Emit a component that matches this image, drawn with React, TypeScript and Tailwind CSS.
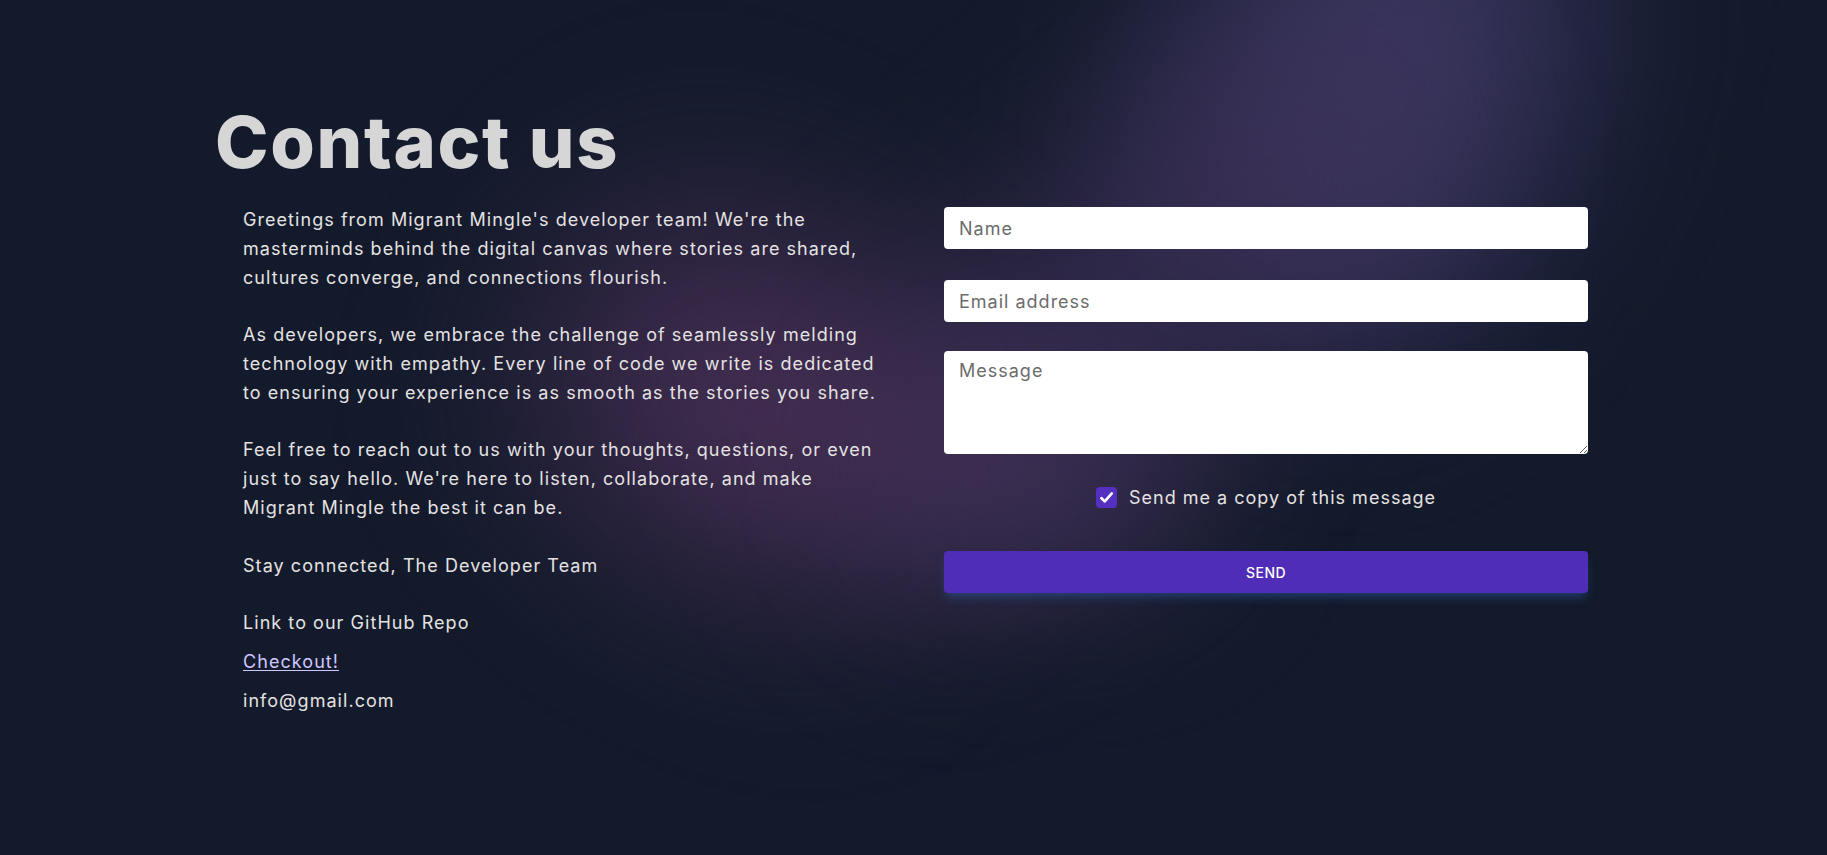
import React from 'react';

const body = { fontFamily: 'Inter, "Noto Sans", sans-serif' };

export default function App() {
  return (
    <div className="relative min-h-screen overflow-hidden bg-[#131a2b] text-[#e4e2e2]" style={body}>
      {/* background glow */}
      <div className="pointer-events-none absolute inset-0">
        <div className="absolute left-[1190px] top-[-170px] h-[520px] w-[360px] rotate-[25deg] rounded-full bg-[#4a4275] opacity-70 blur-[90px]" />
        <div className="absolute left-[760px] top-[170px] h-[260px] w-[720px] -rotate-[40deg] rounded-full bg-[#3c2f55] opacity-70 blur-[90px]" />
        <div className="absolute left-[540px] top-[240px] h-[320px] w-[420px] rotate-[30deg] rounded-full bg-[#553560] opacity-75 blur-[100px]" />
        <div className="absolute left-[900px] top-[380px] h-[200px] w-[300px] rounded-full bg-[#4a3660] opacity-60 blur-[80px]" />
      </div>

      <div className="relative mx-auto w-[1397px] pt-[106px]">
        <h1 className="text-[72px] font-extrabold leading-none tracking-[1.7px] text-[#d6d6d6]">
          Contact us
        </h1>

        <div className="mt-[28px] flex">
          <div className="w-[729px] pl-[28px] pr-[63px] text-[18px] leading-[28.8px] tracking-[1.05px]">
            <p className="mb-[28.8px]">
              Greetings from Migrant Mingle's developer team! We're the masterminds behind the digital canvas where stories are shared, cultures converge, and connections flourish.
            </p>
            <p className="mb-[28.8px]">
              As developers, we embrace the challenge of seamlessly melding technology with empathy. Every line of code we write is dedicated to ensuring your experience is as smooth as the stories you share.
            </p>
            <p className="mb-[28.8px]">
              Feel free to reach out to us with your thoughts, questions, or even just to say hello. We're here to listen, collaborate, and make Migrant Mingle the best it can be.
            </p>
            <p className="mb-[28.8px]">Stay connected, The Developer Team</p>
            <p className="mb-[10px]">Link to our GitHub Repo</p>
            <p className="mb-[10px]">
              <a href="#" className="text-[#cfc8ff] underline underline-offset-2">Checkout!</a>
            </p>
            <p>info@gmail.com</p>
          </div>

          <form className="w-[644px] pt-[1px]" onSubmit={(e) => e.preventDefault()}>
            <input
              type="text"
              placeholder="Name"
              className="mb-[31px] block h-[42px] w-full rounded bg-white px-[15px] text-[18px] tracking-[1px] text-gray-800 placeholder:text-[#6c6c6c] outline-none"
            />
            <input
              type="email"
              placeholder="Email address"
              className="mb-[29px] block h-[42px] w-full rounded bg-white px-[15px] text-[18px] tracking-[1px] text-gray-800 placeholder:text-[#6c6c6c] outline-none"
            />
            <textarea
              placeholder="Message"
              className="block h-[103px] w-full rounded bg-white px-[15px] py-[6px] text-[18px] tracking-[1px] text-gray-800 placeholder:text-[#6c6c6c] outline-none"
            />

            <label className="mt-[29px] flex h-[28px] items-center justify-center gap-[12px] text-[18px] tracking-[1px] text-[#e4e2e2]">
              <span className="flex h-[21px] w-[21px] items-center justify-center rounded-[4px] bg-[#5530c0]">
                <svg viewBox="0 0 16 16" className="h-[15px] w-[15px]" fill="none">
                  <path d="M2.5 8.6 L6.2 12.2 L13.6 3.6" stroke="white" strokeWidth="2.8" strokeLinecap="round" strokeLinejoin="round" />
                </svg>
              </span>
              Send me a copy of this message
            </label>

            <button
              type="submit"
              className="mt-[40px] block h-[42px] w-full rounded bg-[#4f2db8] text-[14px] font-medium uppercase tracking-[0.5px] text-white shadow-[0_6px_10px_-2px_rgba(40,90,160,0.55)]"
            >
              Send
            </button>
          </form>
        </div>
      </div>
    </div>
  );
}
